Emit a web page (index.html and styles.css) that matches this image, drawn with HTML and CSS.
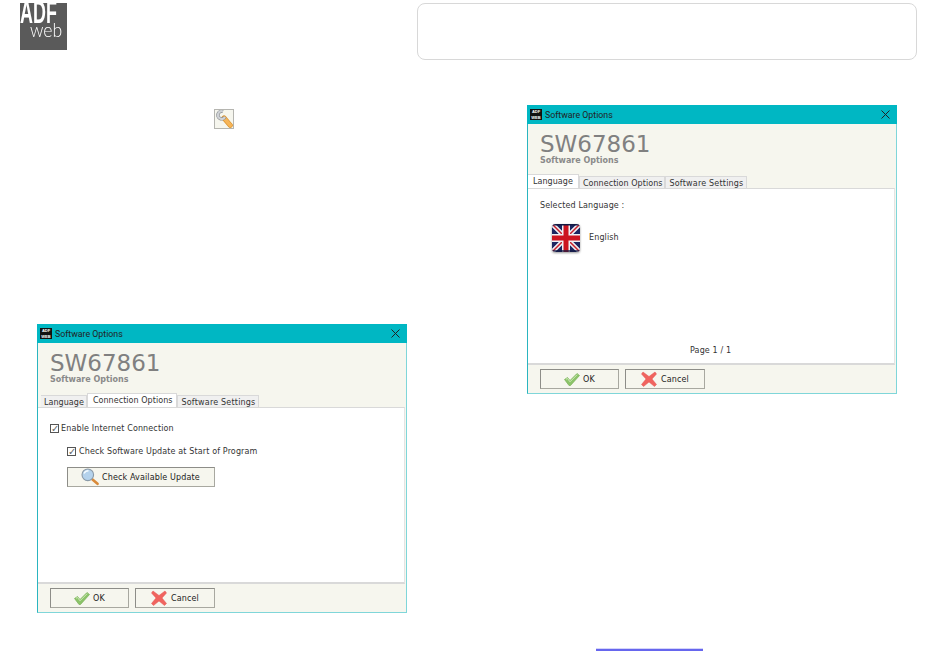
FILE: index.html
```html
<!DOCTYPE html>
<html lang="en">

<head>
    <meta charset="UTF-8">
    <meta name="viewport" content="width=device-width, initial-scale=1.0">
    <title>Software Options</title>
    <link rel="stylesheet" href="styles.css">
</head>

<body>
    <svg class="defs" width="0" height="0">
        <symbol id="icon-ok" viewBox="0 0 16 13">
            <path d="M.5 6.5 L3.5 4.5 L6 7.5 L13 .5 L15.5 2.5 L6.5 12.5 L5 12.5 Z" fill="#8cc46a" stroke="#79b058" stroke-width="0.7"/>
            <path d="M2 6.2 L3.5 5.5 L6 8.8 L13.2 1.6" fill="none" stroke="#cdeab6" stroke-width="1"/>
        </symbol>
        <symbol id="icon-cancel" viewBox="0 0 16 16">
            <path d="M2 1 L8 5.5 L14 1 L15.5 3 L11 8 L15.5 13.5 L13.5 15.5 L8 11 L2.5 15.5 L.5 13.5 L5 8 L.5 3 Z" fill="#f0645f" stroke="#e55450" stroke-width="0.5"/>
        </symbol>
        <symbol id="icon-close" viewBox="0 0 9 9">
            <path d="M.5 .5 L8.5 8.5 M8.5 .5 L.5 8.5" stroke="#222" stroke-width="1" fill="none"/>
        </symbol>
    </svg>

    <div class="page">
        <div class="header">
            <div class="logo">
                <span class="logo-adf">ADF</span>
                <span class="logo-web">web</span>
            </div>
            <div class="note-box"></div>
        </div>

        <div class="columns">
            <div class="col-left">
                <div class="tool-icon">
                    <svg width="18" height="18" viewBox="0 0 18 18">
                        <path d="M9 8 L15.3 15.3" stroke="#d9922e" stroke-width="5" stroke-linecap="round"/>
                        <path d="M9 8 L15.3 15.3" stroke="#f7b558" stroke-width="3.6" stroke-linecap="round"/>
                        <path d="M8 1.5 A3.8 3.8 0 1 0 10 7" fill="none" stroke="#85888c" stroke-width="3.4"/>
                        <path d="M8 1.5 A3.8 3.8 0 1 0 10 7" fill="none" stroke="#cfd2d6" stroke-width="2.2"/>
                    </svg>
                </div>

                <div class="dialog">
                    <div class="titlebar">
                        <div class="app-icon"><span>ADF</span><span>WEB</span></div>
                        <span class="title-text">Software Options</span>
                        <svg class="close" width="9" height="9"><use href="#icon-close"/></svg>
                    </div>
                    <div class="dialog-head">
                        <div class="product">SW67861</div>
                        <div class="subtitle">Software Options</div>
                    </div>
                    <div class="tabs">
                        <div class="tab tab-first">Language</div>
                        <div class="tab tab-active">Connection Options</div>
                        <div class="tab">Software Settings</div>
                    </div>
                    <div class="panel panel-connection">
                        <label class="check"><span class="box">&#10003;</span>Enable Internet Connection</label>
                        <label class="check check-sub"><span class="box">&#10003;</span>Check Software Update at Start of Program</label>
                        <div class="btn btn-update">
                            <svg width="18" height="18" viewBox="0 0 18 18">
                                <path d="M11.5 11.5 L16.5 15.8" stroke="#d98a3a" stroke-width="2.6" stroke-linecap="round"/>
                                <circle cx="6.8" cy="6.8" r="5.8" fill="#b4d2ec" stroke="#8a9aa8" stroke-width="1.1"/>
                                <path d="M3 5.5 C4 3.5 5.5 2.8 7.5 2.8" fill="none" stroke="#f4fbff" stroke-width="1.4"/>
                            </svg>
                            Check Available Update
                        </div>
                    </div>
                    <div class="footer">
                        <div class="btn btn-ok"><svg width="16" height="13"><use href="#icon-ok"/></svg>OK</div>
                        <div class="btn btn-cancel"><svg width="16" height="16"><use href="#icon-cancel"/></svg>Cancel</div>
                    </div>
                </div>
            </div>

            <div class="col-right">
                <div class="dialog">
                    <div class="titlebar">
                        <div class="app-icon"><span>ADF</span><span>WEB</span></div>
                        <span class="title-text">Software Options</span>
                        <svg class="close" width="9" height="9"><use href="#icon-close"/></svg>
                    </div>
                    <div class="dialog-head">
                        <div class="product">SW67861</div>
                        <div class="subtitle">Software Options</div>
                    </div>
                    <div class="tabs">
                        <div class="tab tab-first tab-active">Language</div>
                        <div class="tab">Connection Options</div>
                        <div class="tab">Software Settings</div>
                    </div>
                    <div class="panel panel-language">
                        <div class="selected">Selected Language :</div>
                        <div class="lang-row">
                            <svg class="flag" width="28" height="28" viewBox="0 0 28 28">
                                <defs>
                                    <clipPath id="flag-clip"><rect width="28" height="28" rx="4"/></clipPath>
                                </defs>
                                <g clip-path="url(#flag-clip)">
                                    <rect width="28" height="28" fill="#1c2560"/>
                                    <path d="M0 0 L28 28 M28 0 L0 28" stroke="#eef0f4" stroke-width="4.5"/>
                                    <path d="M0 0 L28 28 M28 0 L0 28" stroke="#c8202c" stroke-width="1.5"/>
                                    <path d="M14 0 V28 M0 14 H28" stroke="#eef0f4" stroke-width="8"/>
                                    <path d="M14 0 V28 M0 14 H28" stroke="#cc1420" stroke-width="5"/>
                                    <rect width="28" height="1.5" fill="#141a44"/>
                                    <rect y="26" width="28" height="2" fill="#141a44" opacity="0.7"/>
                                </g>
                            </svg>
                            <span class="lang-name">English</span>
                        </div>
                        <div class="page-count">Page 1 / 1</div>
                    </div>
                    <div class="footer">
                        <div class="btn btn-ok"><svg width="16" height="13"><use href="#icon-ok"/></svg>OK</div>
                        <div class="btn btn-cancel"><svg width="16" height="16"><use href="#icon-cancel"/></svg>Cancel</div>
                    </div>
                </div>
            </div>
        </div>

        <div class="bottom-link"><a href="javascript:void(0)"></a></div>
    </div>
</body>

</html>
```

FILE: styles.css
```css
body {
    font-family: "DejaVu Sans", Verdana, sans-serif;
    margin: 0;
    background-color: #fff;
}

.defs {
    display: block;
    height: 0;
}

.page {
    width: 950px;
    height: 654px;
    overflow: hidden;
    display: flex;
    flex-direction: column;
}

.header {
    display: flex;
    align-items: flex-start;
    padding: 3px 0 0 20px;
    height: 105px;
    box-sizing: border-box;
}

.logo {
    width: 47px;
    height: 47px;
    background-color: #5a5a5a;
    color: #fff;
    overflow: hidden;
    display: flex;
    flex-direction: column;
}

.logo-adf {
    font-family: "Liberation Sans", Arial, sans-serif;
    font-size: 32px;
    font-weight: bold;
    line-height: 19px;
    white-space: nowrap;
    transform: scaleX(0.56);
    transform-origin: left;
}

.logo-web {
    font-family: Lato, "Liberation Sans", sans-serif;
    font-size: 20px;
    font-weight: 300;
    line-height: 18px;
    margin: -2px 0 0 10px;
    transform: scaleX(0.88);
    transform-origin: left;
}

.note-box {
    width: 498px;
    height: 55px;
    margin-left: 350px;
    border: 1px solid #d8d8d8;
    border-radius: 8px;
}

.columns {
    display: flex;
    height: 543px;
}

.col-left {
    width: 527px;
    padding-left: 37px;
    box-sizing: border-box;
}

.tool-icon {
    width: 18px;
    height: 18px;
    margin: 4px 0 195px 177px;
    background-color: #f6f6ee;
    border: 1px solid #b5b5b0;
}

.tool-icon svg {
    display: block;
}

.dialog {
    width: 370px;
    height: 289px;
    box-sizing: border-box;
    background-color: #f6f6ee;
    border: 1px solid #7fd6d9;
    border-top: none;
    border-left-color: #2ab5c0;
    display: flex;
    flex-direction: column;
    color: #333;
    font-size: 8px;
    letter-spacing: 0.13px;
}

.titlebar {
    height: 19px;
    margin: 0 -1px;
    background-color: #00b7c3;
    display: flex;
    align-items: center;
    padding: 0 7px 0 3px;
    color: #222;
    font-family: Roboto, "Liberation Sans", sans-serif;
    font-size: 8.8px;
    letter-spacing: 0;
    flex-shrink: 0;
}

.app-icon {
    width: 12px;
    height: 11px;
    background-color: #111;
    color: #fff;
    font-family: "Liberation Sans", sans-serif;
    font-size: 4px;
    font-weight: bold;
    line-height: 5.5px;
    display: flex;
    flex-direction: column;
    align-items: center;
    margin-right: 3px;
}

.title-text {
    flex: 1;
}

.dialog-head {
    height: 50px;
    padding: 9px 0 0 12px;
    box-sizing: border-box;
    flex-shrink: 0;
    letter-spacing: 0;
}

.product {
    font-size: 23px;
    line-height: 23px;
    color: #808080;
}

.subtitle {
    font-size: 8px;
    line-height: 9px;
    font-weight: bold;
    color: #8a8a8a;
}

.tabs {
    display: flex;
    align-items: flex-end;
    height: 14px;
    padding-left: 3px;
    flex-shrink: 0;
    letter-spacing: 0.05px;
}

.tab {
    height: 11px;
    line-height: 13px;
    padding: 0 2px 0 3px;
    border: 1px solid #d9d9d9;
    border-bottom: none;
    background-color: #f0f0f0;
    white-space: nowrap;
}

.tab:last-child {
    letter-spacing: 0.2px;
}

.tab-first {
    border-left: none;
}

.tab-active {
    height: 13px;
    line-height: 13px;
    background-color: #fff;
    padding: 0 4px 0 5px;
}

.tab-first.tab-active {
    margin-left: -3px;
    padding: 0 5px;
}

.panel {
    height: 177px;
    background-color: #fff;
    border-top: 1px solid #d9d9d9;
    border-bottom: 2px solid #d9d9d9;
    border-right: 1px solid #e4e4e4;
    box-sizing: border-box;
    margin-right: 1px;
    flex-shrink: 0;
}

.check {
    display: flex;
    align-items: center;
    margin: 15px 0 0 12px;
    height: 10px;
}

.check-sub {
    margin: 13px 0 0 29px;
}

.box {
    width: 7px;
    height: 7px;
    border: 1px solid #555;
    margin-right: 2px;
    font-size: 10px;
    line-height: 7px;
    text-align: center;
    color: #666;
    letter-spacing: 0;
}

.check-sub .box {
    margin-right: 3px;
}

.btn {
    border: 1px solid #a8a8a0;
    border-top-color: #8d8d88;
    border-left-color: #8d8d88;
    background-color: #f6f6ee;
    box-sizing: border-box;
    height: 20px;
    display: flex;
    align-items: center;
    justify-content: center;
    color: #222;
}

.btn-update {
    width: 148px;
    margin: 11px 0 0 29px;
    gap: 3px;
    justify-content: flex-start;
    padding-left: 13px;
}

.footer {
    display: flex;
    gap: 6px;
    padding: 4px 0 0 12px;
}

.btn-ok {
    width: 79px;
    gap: 3px;
}

.btn-cancel {
    width: 80px;
    gap: 4px;
}

.panel-language {
    display: flex;
    flex-direction: column;
}

.selected {
    margin: 12px 0 0 12px;
    line-height: 10px;
}

.lang-row {
    display: flex;
    align-items: center;
    gap: 9px;
    margin: 13px 0 0 24px;
}

.flag {
    filter: drop-shadow(0 1px 1px #999);
}

.lang-name {
    margin-top: -2px;
}

.page-count {
    margin: 94px 0 0 162px;
    line-height: 10px;
}

.bottom-link {
    height: 6px;
    padding-left: 596px;
}

.bottom-link a {
    display: block;
    width: 107px;
    height: 0;
    margin-top: 1px;
    border-bottom: 2px solid #6666ee;
    box-shadow: 0 -1px 0 #d4d4fa;
}
```
